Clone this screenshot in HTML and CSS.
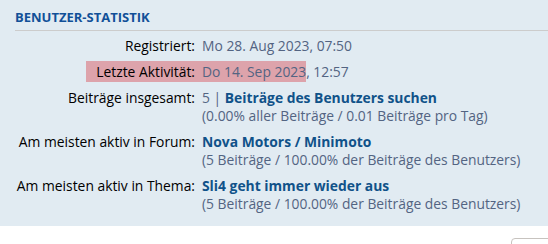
FILE: index.html
```html
<!DOCTYPE html>
<html lang="de">
<head>
  <meta charset="UTF-8">
  <meta name="viewport" content="width=device-width, initial-scale=1.0">
  <title>Benutzer-Statistik</title>
  <link rel="stylesheet" href="styles.css">
</head>
<body>

<div class="panel">
  <h3>Benutzer-Statistik</h3>

  <dl class="details">
    <dt>Registriert:</dt>
    <dd class="muted">Mo 28. Aug 2023, 07:50</dd>

    <dt><span class="mark mark-left">Letzte Aktivität:</span></dt>
    <dd class="muted"><span class="mark mark-right">Do 14. Sep 2023</span>, 12:57</dd>

    <dt>Beiträge insgesamt:</dt>
    <dd class="muted">5 | <a href="#">Beiträge des Benutzers suchen</a><br>(0.00% aller Beiträge / 0.01 Beiträge pro Tag)</dd>

    <dt>Am meisten aktiv in Forum:</dt>
    <dd class="muted"><a href="#">Nova Motors / Minimoto</a><br>(5 Beiträge / 100.00% der Beiträge des Benutzers)</dd>

    <dt>Am meisten aktiv in Thema:</dt>
    <dd class="muted"><a href="#">Sli4 geht immer wieder aus</a><br>(5 Beiträge / 100.00% der Beiträge des Benutzers)</dd>
  </dl>
</div>

<div class="actions">
  <div class="button"></div>
</div>

</body>
</html>
```

FILE: styles.css
```css
body {
  font-family: 'Open Sans', 'Noto Sans', sans-serif;
  font-size: 13.85px;
  color: #000;
  background-color: #fff;
  margin: 0;
  padding: 0;
  overflow: hidden;
}

.panel {
  background-color: #e1ebf2;
  padding: 8px 0 13px 15px;
}

h3 {
  margin: 0;
  padding-bottom: 4px;
  font-size: 13px;
  line-height: 18px;
  font-weight: bold;
  text-transform: uppercase;
  color: #115098;
  border-bottom: 1px solid #cccccc;
}

.details {
  display: grid;
  grid-template-columns: 180px 1fr;
  column-gap: 7px;
  row-gap: 8px;
  margin: 6px 0 0 0;
  line-height: 18px;
}

.details dt {
  text-align: right;
  white-space: nowrap;
}

.details dd {
  margin: 0;
}

.muted {
  color: #536482;
}

.details a {
  color: #105289;
  font-weight: bold;
  text-decoration: none;
}

/* highlight over the last activity row */
.mark {
  background-color: rgba(215, 55, 65, 0.4);
  padding: 1px 0;
}

.mark-left {
  padding-left: 10px;
  padding-right: 7px;
  margin-right: -7px;
}

.actions {
  display: flex;
  height: 18px;
  padding-top: 12px;
  overflow: hidden;
}

.button {
  margin-left: 511px;
  width: 60px;
  height: 24px;
  flex-shrink: 0;
  border: 1px solid #c7c3bf;
  border-radius: 4px;
  background-color: #fff;
}
```
